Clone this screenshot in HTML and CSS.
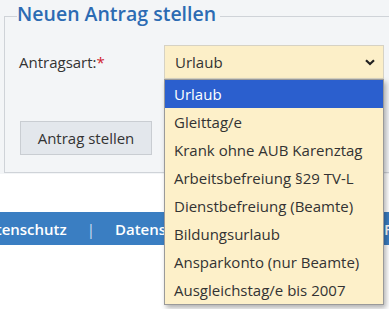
FILE: index.html
```html
<!DOCTYPE html>
<html lang="de">
<head>
<meta charset="utf-8">
<link rel="stylesheet" href="styles.css">
</head>
<body>
<div class="page">
  <div class="formarea">
    <fieldset class="box">
      <legend class="legend">Neuen Antrag stellen</legend>
      <div class="row">
        <label class="label">Antragsart:<span class="req">*</span></label>
        <div class="selectwrap">
          <div class="select">
            <span>Urlaub</span>
            <svg class="chev" width="10" height="7" viewBox="0 0 10 7"><path d="M1 1.2 L5 5 L9 1.2" fill="none" stroke="#222" stroke-width="2.2"/></svg>
          </div>
          <ul class="dropdown">
            <li class="opt active">Urlaub</li>
            <li class="opt">Gleittag/e</li>
            <li class="opt">Krank ohne AUB Karenztag</li>
            <li class="opt">Arbeitsbefreiung §29 TV-L</li>
            <li class="opt">Dienstbefreiung (Beamte)</li>
            <li class="opt">Bildungsurlaub</li>
            <li class="opt">Ansparkonto (nur Beamte)</li>
            <li class="opt">Ausgleichstag/e bis 2007</li>
          </ul>
        </div>
      </div>
      <button class="btn">Antrag stellen</button>
    </fieldset>
  </div>
  <div class="gap"></div>
  <nav class="footer">
    <span class="flink first">Datenschutz</span>
    <span class="sep">|</span>
    <span class="flink">Datenschutz</span>
    <span class="sep">|</span>
    <span class="flink">Impressum</span>
    <span class="sep">|</span>
    <span class="flink">FAQ</span>
  </nav>
</div>
</body>
</html>
```
FILE: styles.css
```css
* { box-sizing: border-box; }
html, body { margin: 0; padding: 0; background: #fff; }
body {
  font-family: "Open Sans", "Noto Sans", sans-serif;
  font-size: 15px;
  color: #333;
  width: 389px;
  height: 309px;
  overflow: hidden;
}
.formarea {
  background: #f3f5f7;
  padding: 3px 0 0 4px;
  height: 174px;
}
.box {
  margin: 0;
  border: 1px solid #cfd3d8;
  border-right: none;
  padding: 16px 0 15px 14px;
  width: 420px;
  height: 170px;
}
.legend {
  color: #2c6bb3;
  font-size: 19.5px;
  font-weight: 600;
  padding: 0 4px 4px 0;
  margin-left: -2px;
  line-height: 22px;
}
.row {
  display: flex;
  align-items: center;
  height: 34px;
}
.label {
  width: 145px;
  color: #333;
}
.req { color: #d0202e; }
.selectwrap {
  position: relative;
  width: 220px;
}
.select {
  height: 34px;
  background: #fcefc8;
  border: 1px solid #d6d2c4;
  display: flex;
  align-items: center;
  justify-content: space-between;
  padding: 0 8px 0 10px;
  color: #333;
}
.chev { margin-top: 1px; }
.dropdown {
  position: absolute;
  left: 0;
  top: 34px;
  width: 220px;
  margin: 0;
  padding: 0;
  list-style: none;
  background: #fdf0c9;
  border: 1px solid #9a9a9a;
  box-shadow: 2px 3px 5px rgba(0,0,0,0.3);
  z-index: 5;
}
.opt {
  height: 28px;
  line-height: 28px;
  padding-left: 9px;
  color: #333;
  white-space: nowrap;
}
.opt.active {
  background: #2b5fce;
  color: #fff;
}
.btn {
  display: block;
  margin-top: 42px;
  margin-left: 1px;
  width: 132px;
  height: 34px;
  background: #e3e7ec;
  border: 1px solid #c9cdd2;
  font-family: "Open Sans", "Noto Sans", sans-serif;
  font-size: 15px;
  color: #333;
  padding: 0;
}
.gap { height: 38px; }
.footer {
  background: #3a7ec2;
  height: 33px;
  display: flex;
  align-items: center;
  white-space: nowrap;
  color: #fff;
  font-weight: 600;
  font-size: 15px;
  overflow: hidden;
}
.flink.first { margin-left: -24px; }
.sep {
  font-weight: normal;
  color: #cfe0f2;
  margin: 0 20px;
}
```
